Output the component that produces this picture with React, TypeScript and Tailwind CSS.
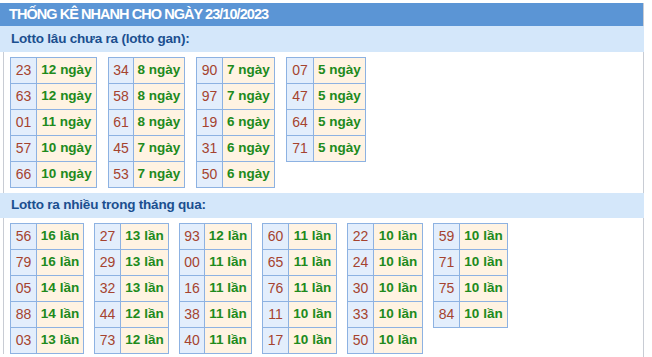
import React from 'react';

type Row = [string, string];

const ganTables: { rows: Row[]; numW: string; valW: string }[] = [
  { numW: 'w-[26px]', valW: 'w-[60px]', rows: [['23', '12 ngày'], ['63', '12 ngày'], ['01', '11 ngày'], ['57', '10 ngày'], ['66', '10 ngày']] },
  { numW: 'w-[25px]', valW: 'w-[51px]', rows: [['34', '8 ngày'], ['58', '8 ngày'], ['61', '8 ngày'], ['45', '7 ngày'], ['53', '7 ngày']] },
  { numW: 'w-[26px]', valW: 'w-[52px]', rows: [['90', '7 ngày'], ['97', '7 ngày'], ['19', '6 ngày'], ['31', '6 ngày'], ['50', '6 ngày']] },
  { numW: 'w-[27px]', valW: 'w-[52px]', rows: [['07', '5 ngày'], ['47', '5 ngày'], ['64', '5 ngày'], ['71', '5 ngày']] },
];

const nhieuTables: { rows: Row[]; numW: string; valW: string }[] = [
  { numW: 'w-[26px]', valW: 'w-[47px]', rows: [['56', '16 lần'], ['79', '16 lần'], ['05', '14 lần'], ['88', '14 lần'], ['03', '13 lần']] },
  { numW: 'w-[26px]', valW: 'w-[48px]', rows: [['27', '13 lần'], ['29', '13 lần'], ['32', '13 lần'], ['44', '12 lần'], ['73', '12 lần']] },
  { numW: 'w-[25px]', valW: 'w-[47px]', rows: [['93', '12 lần'], ['00', '11 lần'], ['16', '11 lần'], ['38', '11 lần'], ['40', '11 lần']] },
  { numW: 'w-[26px]', valW: 'w-[48px]', rows: [['60', '11 lần'], ['65', '11 lần'], ['76', '11 lần'], ['11', '10 lần'], ['17', '10 lần']] },
  { numW: 'w-[26px]', valW: 'w-[49px]', rows: [['22', '10 lần'], ['24', '10 lần'], ['30', '10 lần'], ['33', '10 lần'], ['50', '10 lần']] },
  { numW: 'w-[26px]', valW: 'w-[48px]', rows: [['59', '10 lần'], ['71', '10 lần'], ['75', '10 lần'], ['84', '10 lần']] },
];

function LotoTable({ rows, numW, valW }: { rows: Row[]; numW: string; valW: string }) {
  return (
    <table className="border-collapse border border-[#8db2e2]">
      <tbody>
        {rows.map(([num, val]) => (
          <tr key={num} className="h-[26px]">
            <td className={`${numW} border border-[#8db2e2] bg-[#e3eefc] text-center text-[14px] text-[#a5432f] p-0`}>{num}</td>
            <td className={`${valW} border border-[#8db2e2] bg-[#fff3e2] text-center text-[13.5px] font-bold text-[#208a1c] p-0`}>{val}</td>
          </tr>
        ))}
      </tbody>
    </table>
  );
}

export default function App() {
  return (
    <div className="w-[652px] h-[357px] bg-white font-['Liberation_Sans',Arial,sans-serif] pt-[3px] overflow-hidden">
      <div className="w-[644px] h-[354px] border-r border-[#c8ccd4]">
        <div className="h-[23px] bg-[#5b95d5] flex items-center pl-[9px]">
          <h2 className="text-white font-bold text-[14.5px] tracking-[-0.95px] leading-none">THỐNG KÊ NHANH CHO NGÀY 23/10/2023</h2>
        </div>
        <div className="border-l border-[#c8ccd4] ml-[3px] -mr-px">
          <div className="h-[26px] bg-[#d4e7fa] -ml-[4px] flex items-center pl-[11px]">
            <span className="text-[#1b4f8f] font-bold text-[13.5px] tracking-[-0.2px]">Lotto lâu chưa ra (lotto gan):</span>
          </div>
          <div className="flex items-start gap-[11px] pl-[6px] pt-[5px] h-[141px]">
            {ganTables.map((t, i) => (
              <LotoTable key={i} {...t} />
            ))}
          </div>
          <div className="h-[25px] bg-[#d4e7fa] -ml-[4px] flex items-center pl-[11px]">
            <span className="text-[#1b4f8f] font-bold text-[13.5px] tracking-[-0.2px]">Lotto ra nhiều trong tháng qua:</span>
          </div>
          <div className="flex items-start gap-[10px] pl-[6px] pt-[5px]">
            {nhieuTables.map((t, i) => (
              <LotoTable key={i} {...t} />
            ))}
          </div>
        </div>
      </div>
    </div>
  );
}
